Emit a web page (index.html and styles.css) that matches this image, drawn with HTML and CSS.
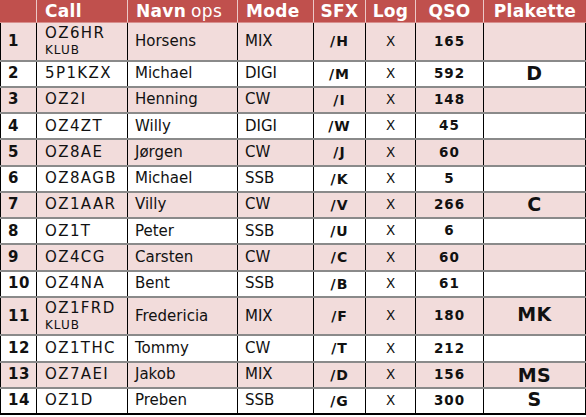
FILE: index.html
```html
<!DOCTYPE html>
<html>
<head>
<meta charset="utf-8">
<link rel="stylesheet" href="styles.css">
</head>
<body>
<div class="sheet">
  <div class="row head">
    <div class="c"></div>
    <div class="c l">Call</div>
    <div class="c l">Navn <span class="thin">ops</span></div>
    <div class="c l">Mode</div>
    <div class="c m">SFX</div>
    <div class="c m">Log</div>
    <div class="c m">QSO</div>
    <div class="c m">Plakette</div>
  </div>

  <div class="row pink tall">
    <div class="c n">1</div>
    <div class="c l call"><span>OZ6HR</span><span class="klub">KLUB</span></div>
    <div class="c l">Horsens</div>
    <div class="c l">MIX</div>
    <div class="c m sfx">/H</div>
    <div class="c m log">X</div>
    <div class="c m qso">165</div>
    <div class="c m plak"></div>
  </div>
  <div class="row">
    <div class="c n">2</div>
    <div class="c l call">5P1KZX</div>
    <div class="c l">Michael</div>
    <div class="c l">DIGI</div>
    <div class="c m sfx">/M</div>
    <div class="c m log">X</div>
    <div class="c m qso">592</div>
    <div class="c m plak">D</div>
  </div>
  <div class="row pink">
    <div class="c n">3</div>
    <div class="c l call">OZ2I</div>
    <div class="c l">Henning</div>
    <div class="c l">CW</div>
    <div class="c m sfx">/I</div>
    <div class="c m log">X</div>
    <div class="c m qso">148</div>
    <div class="c m plak"></div>
  </div>
  <div class="row">
    <div class="c n">4</div>
    <div class="c l call">OZ4ZT</div>
    <div class="c l">Willy</div>
    <div class="c l">DIGI</div>
    <div class="c m sfx">/W</div>
    <div class="c m log">X</div>
    <div class="c m qso">45</div>
    <div class="c m plak"></div>
  </div>
  <div class="row pink">
    <div class="c n">5</div>
    <div class="c l call">OZ8AE</div>
    <div class="c l">Jørgen</div>
    <div class="c l">CW</div>
    <div class="c m sfx">/J</div>
    <div class="c m log">X</div>
    <div class="c m qso">60</div>
    <div class="c m plak"></div>
  </div>
  <div class="row">
    <div class="c n">6</div>
    <div class="c l call">OZ8AGB</div>
    <div class="c l">Michael</div>
    <div class="c l">SSB</div>
    <div class="c m sfx">/K</div>
    <div class="c m log">X</div>
    <div class="c m qso">5</div>
    <div class="c m plak"></div>
  </div>
  <div class="row pink">
    <div class="c n">7</div>
    <div class="c l call">OZ1AAR</div>
    <div class="c l">Villy</div>
    <div class="c l">CW</div>
    <div class="c m sfx">/V</div>
    <div class="c m log">X</div>
    <div class="c m qso">266</div>
    <div class="c m plak">C</div>
  </div>
  <div class="row">
    <div class="c n">8</div>
    <div class="c l call">OZ1T</div>
    <div class="c l">Peter</div>
    <div class="c l">SSB</div>
    <div class="c m sfx">/U</div>
    <div class="c m log">X</div>
    <div class="c m qso">6</div>
    <div class="c m plak"></div>
  </div>
  <div class="row pink">
    <div class="c n">9</div>
    <div class="c l call">OZ4CG</div>
    <div class="c l">Carsten</div>
    <div class="c l">CW</div>
    <div class="c m sfx">/C</div>
    <div class="c m log">X</div>
    <div class="c m qso">60</div>
    <div class="c m plak"></div>
  </div>
  <div class="row">
    <div class="c n">10</div>
    <div class="c l call">OZ4NA</div>
    <div class="c l">Bent</div>
    <div class="c l">SSB</div>
    <div class="c m sfx">/B</div>
    <div class="c m log">X</div>
    <div class="c m qso">61</div>
    <div class="c m plak"></div>
  </div>
  <div class="row pink tall">
    <div class="c n">11</div>
    <div class="c l call"><span>OZ1FRD</span><span class="klub">KLUB</span></div>
    <div class="c l">Fredericia</div>
    <div class="c l">MIX</div>
    <div class="c m sfx">/F</div>
    <div class="c m log">X</div>
    <div class="c m qso">180</div>
    <div class="c m plak up">MK</div>
  </div>
  <div class="row">
    <div class="c n">12</div>
    <div class="c l call">OZ1THC</div>
    <div class="c l">Tommy</div>
    <div class="c l">CW</div>
    <div class="c m sfx">/T</div>
    <div class="c m log">X</div>
    <div class="c m qso">212</div>
    <div class="c m plak"></div>
  </div>
  <div class="row pink">
    <div class="c n">13</div>
    <div class="c l call">OZ7AEI</div>
    <div class="c l">Jakob</div>
    <div class="c l">MIX</div>
    <div class="c m sfx">/D</div>
    <div class="c m log">X</div>
    <div class="c m qso">156</div>
    <div class="c m plak up">MS</div>
  </div>
  <div class="row last">
    <div class="c n">14</div>
    <div class="c l call">OZ1D</div>
    <div class="c l">Preben</div>
    <div class="c l">SSB</div>
    <div class="c m sfx">/G</div>
    <div class="c m log">X</div>
    <div class="c m qso">300</div>
    <div class="c m plak up">S</div>
  </div>
</div>
</body>
</html>
```

FILE: styles.css
```css
* { box-sizing: border-box; }
html, body { margin: 0; padding: 0; background: #ffffff; }
body {
  font-family: "DejaVu Sans", Verdana, sans-serif;
  color: #111111;
  width: 586px;
  height: 417px;
  overflow: hidden;
}
.sheet {
  display: flex;
  flex-direction: column;
  width: 586px;
}
.row {
  display: grid;
  grid-template-columns: 37px 91px 110px 76px 52px 50px 68px 102px;
  height: 26.25px;
  border-bottom: 2px solid #8a8a8a;
  background: #ffffff;
}
.row.pink { background: #f2dcdb; }
.row.tall { height: 38.5px; }
.row.last { border-bottom: 2px solid #000000; }
.row.head {
  height: 23px;
  background: #c0504d;
  border-bottom: 1px solid #d88f8d;
  color: #ffffff;
  font-weight: bold;
  font-size: 17px;
  letter-spacing: 0.3px;
}
.c {
  display: flex;
  align-items: center;
  border-right: 1px solid #000000;
  font-size: 15px;
  line-height: 1;
  white-space: nowrap;
  overflow: hidden;
}
.c:first-child { border-left: 1px solid #000000; }
.head .c { border-right: 1px solid #ecc8c7; font-size: 17px; }
.head .c:first-child { border-left: 0; }
.head .c:last-child { border-right: 0; }
.head .c.l { padding-left: 8px; }
.thin { font-weight: normal; margin-left: 5px; }
.c.l { padding-left: 7px; }
.c.m { justify-content: center; }
.c.n { font-weight: bold; padding-left: 7px; font-size: 15px; letter-spacing: 0.5px; }
.c.call {
  padding-left: 8px;
  letter-spacing: 1.4px;
  flex-direction: column;
  align-items: flex-start;
  justify-content: center;
}
.klub { font-size: 12px; letter-spacing: 1px; margin-top: 3px; }
.sfx { font-weight: bold; font-size: 14px; letter-spacing: 1px; }
.log { font-size: 13.5px; }
.qso { font-weight: bold; font-size: 13.5px; letter-spacing: 1px; }
.plak { font-weight: bold; font-size: 19px; letter-spacing: 0.5px; }
.plak.up { align-items: flex-start; padding-top: 3px; }
.tall .plak.up { padding-top: 7px; }
.last .plak.up { padding-top: 1px; }
```
